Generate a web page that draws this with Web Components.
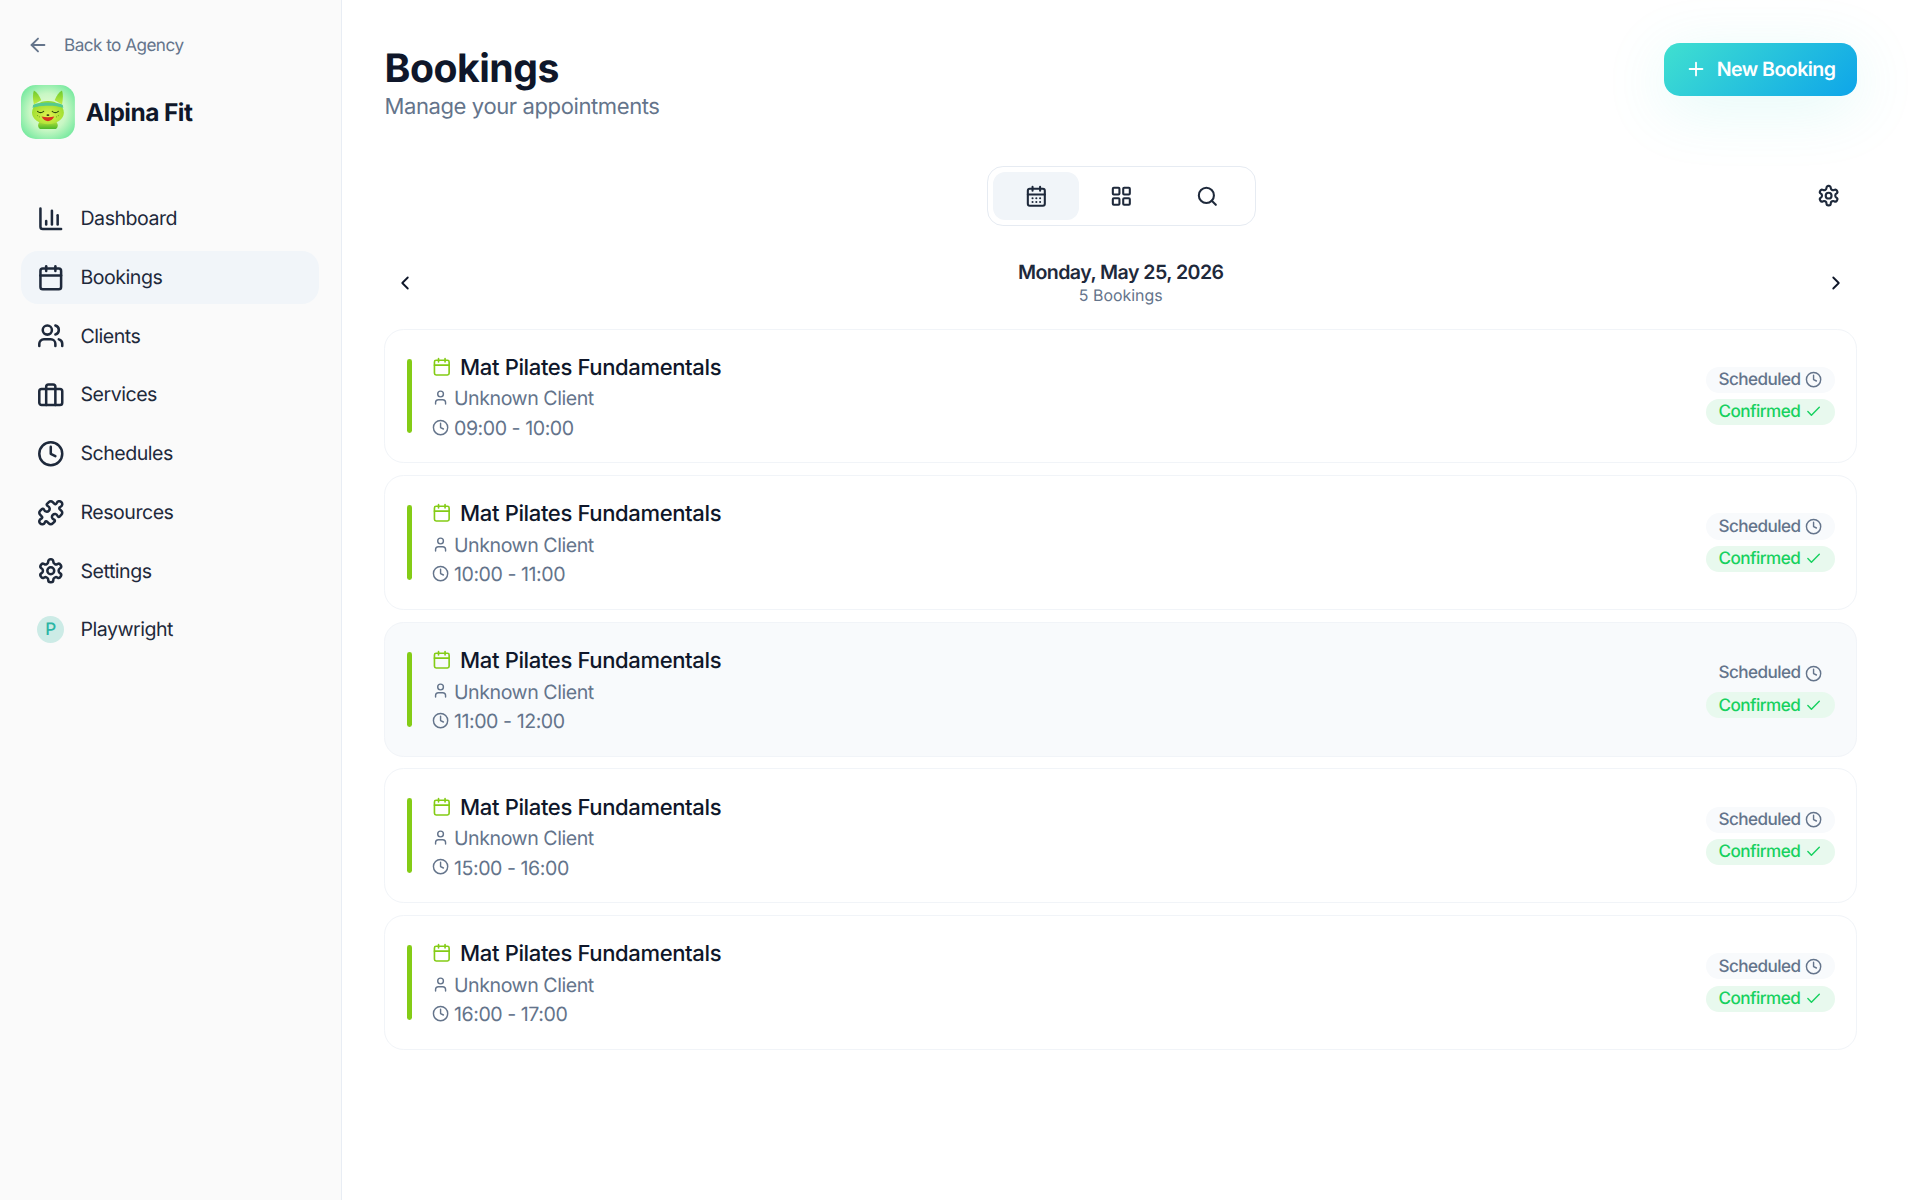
<!DOCTYPE html>
<html lang="en"><head><meta charset="utf-8"><title>Bookings</title>
<style>
html,body{margin:0;padding:0;background:#fff;height:100%;overflow:hidden}
body{font-family:Inter,"Liberation Sans",sans-serif;color:#0f172a;text-rendering:geometricPrecision}
</style></head><body>
<bookings-app>
  <app-sidebar slot="side">
    <back-link slot="back">Back to Agency</back-link>
    <brand-mark slot="brand">Alpina Fit</brand-mark>
    <nav-item icon="chart">Dashboard</nav-item>
    <nav-item icon="calendar" active>Bookings</nav-item>
    <nav-item icon="users">Clients</nav-item>
    <nav-item icon="briefcase">Services</nav-item>
    <nav-item icon="clock">Schedules</nav-item>
    <nav-item icon="puzzle">Resources</nav-item>
    <nav-item icon="cog">Settings</nav-item>
    <nav-item avatar="P">Playwright</nav-item>
  </app-sidebar>
  <page-header title="Bookings" sub="Manage your appointments">New Booking</page-header>
  <view-bar></view-bar>
  <date-nav date="Monday, May 25, 2026" sub="5 Bookings"></date-nav>
  <booking-list>
    <booking-card time="09:00 - 10:00"></booking-card>
    <booking-card time="10:00 - 11:00"></booking-card>
    <booking-card time="11:00 - 12:00" hovered></booking-card>
    <booking-card time="15:00 - 16:00"></booking-card>
    <booking-card time="16:00 - 17:00"></booking-card>
  </booking-list>
</bookings-app>
<script>
const P={
 chart:'<path d="M3 3v16a2 2 0 0 0 2 2h16"/><path d="M18 17V9"/><path d="M13 17V5"/><path d="M8 17v-3"/>',
 calendar:'<path d="M8 2v4"/><path d="M16 2v4"/><rect x="3" y="4" width="18" height="18" rx="2"/><path d="M3 10h18"/>',
 calendarDays:'<path d="M8 2v4"/><path d="M16 2v4"/><rect x="3" y="4" width="18" height="18" rx="2"/><path d="M3 10h18"/><path d="M8 14h.01"/><path d="M12 14h.01"/><path d="M16 14h.01"/><path d="M8 18h.01"/><path d="M12 18h.01"/><path d="M16 18h.01"/>',
 users:'<path d="M16 21v-2a4 4 0 0 0-4-4H6a4 4 0 0 0-4 4v2"/><circle cx="9" cy="7" r="4"/><path d="M22 21v-2a4 4 0 0 0-3-3.87"/><path d="M16 3.13a4 4 0 0 1 0 7.75"/>',
 briefcase:'<path d="M16 21V5a2 2 0 0 0-2-2h-4a2 2 0 0 0-2 2v16"/><rect x="2" y="7" width="20" height="14" rx="2"/>',
 clock:'<circle cx="12" cy="12" r="10"/><polyline points="12 6 12 12 16 14"/>',
 puzzle:'<path d="M19.439 7.85c-.049.322.059.648.289.878l1.568 1.568c.47.47.706 1.087.706 1.704s-.235 1.233-.706 1.704l-1.611 1.611a.98.98 0 0 1-.837.276c-.47-.07-.802-.48-.968-.925a2.501 2.501 0 1 0-3.214 3.214c.446.166.855.497.925.968a.979.979 0 0 1-.276.837l-1.61 1.61a2.404 2.404 0 0 1-1.705.707 2.402 2.402 0 0 1-1.704-.706l-1.568-1.568a1.026 1.026 0 0 0-.877-.29c-.493.074-.84.504-1.02.968a2.5 2.5 0 1 1-3.237-3.237c.464-.18.894-.527.967-1.02a1.026 1.026 0 0 0-.289-.877l-1.568-1.568A2.402 2.402 0 0 1 1.998 12c0-.617.236-1.234.706-1.704L4.23 8.77c.24-.24.581-.353.917-.303.515.077.877.528 1.073 1.01a2.5 2.5 0 1 0 3.259-3.259c-.482-.196-.933-.558-1.01-1.073-.05-.336.062-.676.303-.917l1.525-1.525A2.402 2.402 0 0 1 12 1.998c.617 0 1.234.236 1.704.706l1.568 1.568c.23.23.556.338.877.29.493-.074.84-.504 1.02-.968a2.5 2.5 0 1 1 3.237 3.237c-.464.18-.894.527-.967 1.02Z"/>',
 cog:'<path d="M12.22 2h-.44a2 2 0 0 0-2 2v.18a2 2 0 0 1-1 1.73l-.43.25a2 2 0 0 1-2 0l-.15-.08a2 2 0 0 0-2.73.73l-.22.38a2 2 0 0 0 .73 2.73l.15.1a2 2 0 0 1 1 1.72v.51a2 2 0 0 1-1 1.74l-.15.09a2 2 0 0 0-.73 2.73l.22.38a2 2 0 0 0 2.73.73l.15-.08a2 2 0 0 1 2 0l.43.25a2 2 0 0 1 1 1.73V20a2 2 0 0 0 2 2h.44a2 2 0 0 0 2-2v-.18a2 2 0 0 1 1-1.73l.43-.25a2 2 0 0 1 2 0l.15.08a2 2 0 0 0 2.73-.73l.22-.39a2 2 0 0 0-.73-2.73l-.15-.08a2 2 0 0 1-1-1.74v-.5a2 2 0 0 1 1-1.74l.15-.09a2 2 0 0 0 .73-2.73l-.22-.38a2 2 0 0 0-2.73-.73l-.15.08a2 2 0 0 1-2 0l-.43-.25a2 2 0 0 1-1-1.73V4a2 2 0 0 0-2-2z"/><circle cx="12" cy="12" r="3"/>',
 grid:'<rect x="3" y="3" width="7" height="7" rx="1"/><rect x="14" y="3" width="7" height="7" rx="1"/><rect x="14" y="14" width="7" height="7" rx="1"/><rect x="3" y="14" width="7" height="7" rx="1"/>',
 search:'<circle cx="11" cy="11" r="8"/><path d="m21 21-4.3-4.3"/>',
 user:'<path d="M19 21v-2a4 4 0 0 0-4-4H9a4 4 0 0 0-4 4v2"/><circle cx="12" cy="7" r="4"/>',
 check:'<path d="M20 6 9 17l-5-5"/>',
 plus:'<path d="M5 12h14"/><path d="M12 5v14"/>',
 left:'<path d="m15 18-6-6 6-6"/>',
 right:'<path d="m9 18 6-6-6-6"/>',
 back:'<path d="m12 19-7-7 7-7"/><path d="M19 12H5"/>'
};
const svg=(n,s,w=2)=>`<svg xmlns="http://www.w3.org/2000/svg" width="${s}" height="${s}" viewBox="0 0 24 24" fill="none" stroke="currentColor" stroke-width="${w}" stroke-linecap="round" stroke-linejoin="round" style="display:block;flex:none">${P[n]}</svg>`;
function def(name,html){
  customElements.define(name,class extends HTMLElement{
    constructor(){super();this.attachShadow({mode:'open'});}
    connectedCallback(){this.shadowRoot.innerHTML=typeof html==='function'?html(this):html;}
  });
}
def('bookings-app',`<style>
:host{display:grid;grid-template-columns:279px 1fr;zoom:1.2245;width:1568px;height:980px;overflow:hidden;background:#fff;font-family:Inter,"Liberation Sans",sans-serif}
main{padding:35px 51.5px 0 35px;min-width:0}
</style><slot name="side"></slot><main><slot></slot></main>`);
def('app-sidebar',`<style>
:host{display:block;box-sizing:border-box;height:980px;background:#fafafa;border-right:1px solid #e8edf4;padding:27px 18px 0 17.5px}
.nav{display:flex;flex-direction:column;gap:5px;margin-top:43.500px}
.brand{margin-top:22.500px}
</style><slot name="back"></slot><div class="brand"><slot name="brand"></slot></div><div class="nav"><slot></slot></div>`);
def('back-link',`<style>
:host{display:flex;align-items:center;gap:12.600px;height:20px;padding-left:4.200px;color:#64748b;font-size:14px;font-weight:400;line-height:20px;letter-spacing:-.43px}
span{padding-top:1.5px}
</style>${svg('back',18)}<span><slot></slot></span>`);
def('brand-mark',`<style>
:host{display:flex;align-items:center;gap:8.5px;height:44px;font-size:20px;font-weight:700;color:#0f172a;letter-spacing:-.45px}
svg{display:block;flex:none}
span{margin-top:0}
</style><svg width="44" height="44" viewBox="0 0 44 44" role="img" aria-label="Alpina Fit logo">
<defs>
<radialGradient id="bg" cx="50%" cy="50%" r="62%"><stop offset="0" stop-color="#eefcd8"/><stop offset=".55" stop-color="#c8f7c4"/><stop offset="1" stop-color="#6fe89c"/></radialGradient>
<radialGradient id="head" cx="50%" cy="62%" r="60%"><stop offset="0" stop-color="#e3f24f"/><stop offset="1" stop-color="#95dc2c"/></radialGradient>
<linearGradient id="ear" x1="0" y1="0" x2="0" y2="1"><stop offset="0" stop-color="#6cc92c"/><stop offset="1" stop-color="#c4ee42"/></linearGradient>
<linearGradient id="bod" x1="0" y1="0" x2="0" y2="1"><stop offset="0" stop-color="#d5ec40"/><stop offset="1" stop-color="#48b82a"/></linearGradient>
</defs>
<rect width="44" height="44" rx="12" fill="url(#bg)"/>
<path d="M14 33c0-3 3.500-5 8-5s8 2 8 5c0 1.800-1 3-3 3H17c-2 0-3-1.200-3-3z" fill="url(#bod)"/>
<path d="M10.500 16C9.500 11 9.500 7 10.500 4.500c2.500 1.500 4.500 4 6 8z" fill="url(#ear)"/>
<path d="M33.500 16c1-5 1-9 0-11.500-2.500 1.500-4.500 4-6 8z" fill="url(#ear)"/>
<ellipse cx="22" cy="22.500" rx="13" ry="9.500" fill="url(#head)"/>
<path d="M9.800 16.500c3-3 21.400-3 24.400 0l.3 2.300c-5-2.500-20-2.500-25 0z" fill="#55c98e"/>
<path d="M13.500 21.500c1.500 1.300 3.500 1.300 5 0M25.500 21.500c1.500 1.300 3.500 1.300 5 0" fill="none" stroke="#2f4a10" stroke-width=".9" stroke-linecap="round"/>
<path d="M16.800 25.800c2.500 5 7.900 5 10.400 0-3 .8-7.400 .8-10.400 0z" fill="#d8331f"/>
<ellipse cx="22" cy="24.600" rx="1.200" ry=".8" fill="#2b3510"/>
<g fill="#6fae1e"><circle cx="13.500" cy="25" r=".5"/><circle cx="15" cy="26" r=".5"/><circle cx="30.500" cy="25" r=".5"/><circle cx="29" cy="26" r=".5"/></g>
</svg><span><slot></slot></span>`);
def('nav-item',h=>{
 const a=h.getAttribute('avatar');
 const ic=a?`<span class="av">${a}</span>`:svg(h.getAttribute('icon'),22.500,2.200);
 return `<style>
:host{display:flex;align-items:center;gap:12.750px;height:43px;padding-left:13px;border-radius:14px;font-size:16px;color:#1e293b;line-height:24px;letter-spacing:-.4px}
:host([active]){background:#f1f5f9}
.t{padding-top:.5px}
svg{color:#1e293b}
.av{width:22px;height:22px;margin-right:.5px;border-radius:50%;background:#ccebe6;color:#2bb5a4;font-size:14px;font-weight:500;letter-spacing:0;display:flex;align-items:center;justify-content:center;flex:none}
</style>${ic}<span class="t"><slot></slot></span>`});
def('page-header',h=>`<style>
:host{display:flex;justify-content:space-between;align-items:flex-start}
h1{margin:2.200px 0 0;font-size:32px;line-height:38px;font-weight:700;color:#0f172a;letter-spacing:-.4px}
p{margin:0;padding-top:1px;font-size:18px;line-height:24px;color:#64748b;letter-spacing:-.33px}
button{all:unset;box-sizing:border-box;display:flex;align-items:center;gap:8px;width:157.500px;height:43.400px;padding-left:17px;border-radius:13px;background:linear-gradient(135deg,#40e0d0,#0ea5e9);color:#fff;font-size:16px;font-weight:600;letter-spacing:-.45px;box-shadow:0 10px 50px rgba(64,224,208,.15)}
</style><div><h1>${h.getAttribute('title')}</h1><p>${h.getAttribute('sub')}</p></div><button>${svg('plus',18)}<slot></slot></button>`);
def('view-bar',`<style>
:host{display:grid;grid-template-columns:1fr auto 1fr;align-items:center;margin-top:35.100px;padding-left:1.300px;color:#1e293b}
.tabs{display:flex;box-sizing:border-box;height:49.500px;padding:4px;border:1.500px solid #e6ebf2;border-radius:13px;background:#fff}
.t{width:69.800px;display:flex;align-items:center;justify-content:center;border-radius:10px}
.on{background:#f1f5f9}
.g{justify-self:end;padding-right:14px}
</style><span></span><div class="tabs"><span class="t on">${svg('calendarDays',18.500,2.200)}</span><span class="t">${svg('grid',18.500,2.200)}</span><span class="t">${svg('search',18.500,2.200)}</span></div><span class="g">${svg('cog',19,2.200)}</span>`);
def('date-nav',h=>`<style>
:host{display:grid;grid-template-columns:1fr auto 1fr;align-items:center;margin-top:26.100px;padding:0 8px;color:#0f172a}
.c{text-align:center}
.d{font-size:16px;line-height:22px;padding-top:1px;margin-bottom:-1px;font-weight:600;color:#1e293b;letter-spacing:-.45px}
.s{font-size:13px;line-height:18px;color:#64748b}
.r{justify-self:end}
</style>${svg('left',18)}<div class="c"><div class="d">${h.getAttribute('date')}</div><div class="s">${h.getAttribute('sub')}</div></div><span class="r">${svg('right',18)}</span>`);
def('booking-list',`<style>:host{display:flex;flex-direction:column;gap:9.750px;margin-top:17.500px}</style><slot></slot>`);
def('status-badge',h=>`<style>
:host{display:flex;align-items:center;justify-content:space-between;box-sizing:border-box;height:21.300px;width:105.300px;padding:0 10.400px 0 10px;border-radius:11px;font-size:14px;line-height:20px;font-weight:500;letter-spacing:-.45px;background:#f8fafc;color:#64748b}
:host([ok]){background:#e8f9ee;color:#17d15f}
span{padding-top:1px}
</style><span><slot></slot></span>${svg(h.getAttribute('icon'),14,2)}`);
def('booking-card',h=>`<style>
:host{display:flex;align-items:center;box-sizing:border-box;height:110px;padding:0 17px 0 17px;border:1.500px solid #f1f4f8;border-radius:16px;background:#fff}
:host([hovered]){background:#f8fafc}
.bar{width:4px;height:61px;border-radius:2px;background:#84cc16;margin:0 16.800px 0 .3px;flex:none}
.info{flex:1;min-width:0}
.row{display:flex;align-items:center}
.title{height:26px;font-size:18px;font-weight:500;color:#0f172a;gap:6.900px;letter-spacing:-.3px}
.title svg{color:#84cc16}
.title span{padding-top:2px}
.m{height:24px;font-size:16px;color:#64748b;gap:3.900px;letter-spacing:-.37px}
.m span{padding-top:2px}
.m svg{margin-top:1px}
.st{display:flex;flex-direction:column;gap:5px}
</style><div class="bar"></div><div class="info">
<div class="row title">${svg('calendar',16,2)}<span>Mat Pilates Fundamentals</span></div>
<div class="row m">${svg('user',14,2)}<span>Unknown Client</span></div>
<div class="row m">${svg('clock',14,2)}<span>${h.getAttribute('time')}</span></div>
</div><div class="st"><status-badge icon="clock">Scheduled</status-badge><status-badge icon="check" ok>Confirmed</status-badge></div>`);
</script>
</body></html>
